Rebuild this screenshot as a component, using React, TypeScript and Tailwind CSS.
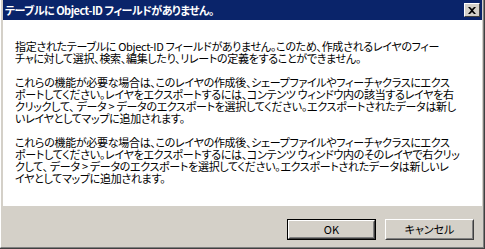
import React from "react";

const font = { fontFamily: '"MS UI Gothic", "Noto Sans CJK JP", sans-serif' };

function Btn({ children, def }: { children: React.ReactNode; def?: boolean }) {
  return (
    <div className={`w-[89px] h-[21px] ${def ? "border border-black" : ""}`}>
      <div className="h-full w-full border border-t-white border-l-white border-r-[#404040] border-b-[#404040]">
        <div className="h-full w-full border border-t-[#d4d0c8] border-l-[#d4d0c8] border-r-[#808080] border-b-[#808080] flex items-center justify-center text-[11px] leading-none text-black bg-[#d4d0c8]">
          {children}
        </div>
      </div>
    </div>
  );
}

export default function App() {
  const p = "whitespace-nowrap";
  return (
    <div
      className="w-[485px] h-[249px] bg-[#d4d0c8] flex flex-col border-r border-b border-r-[#404040] border-b-[#404040] [font-feature-settings:'palt']"
      style={font}
    >
      <div className="flex-1 flex flex-col border-l border-l-white border-r border-r-[#808080] border-b border-b-[#808080] pl-[2px] pr-[1px]">
        <div className="h-[20px] bg-[#0a246a] flex items-center justify-between pl-[2px] pr-[2px]">
          <span className="text-white font-bold text-[11px] leading-none tracking-[-0.5px]">テーブルに Object-ID フィールドがありません。</span>
          <div className="w-[16px] h-[14px] bg-[#d4d0c8] border border-t-white border-l-white border-r-[#404040] border-b-[#404040] flex items-center justify-center">
            <svg width="8" height="7" viewBox="0 0 8 7">
              <path d="M0 0h2l2 2 2-2h2L5 3.5 8 7H6L4 5 2 7H0l3-3.5z" fill="#000" />
            </svg>
          </div>
        </div>
        <div className="h-[186px] bg-white pl-[12px] pt-[20px] text-[11px] leading-[12px] tracking-[-0.3px] text-black">
          <p className={p}>
            指定されたテーブルに Object-ID フィールドがありません。このため、作成されるレイヤのフィー
            <br />
            チャに対して選択、検索、編集したり、リレートの定義をすることができません。
          </p>
          <p className={`${p} mt-[12px]`}>
            これらの機能が必要な場合は、このレイヤの作成後、シェープファイルやフィーチャクラスにエクス
            <br />
            ポートしてください。レイヤをエクスポートするには、コンテンツ ウィンドウ内の該当するレイヤを右
            <br />
            クリックして、 データ &gt; データのエクスポートを選択してください。エクスポートされたデータは新し
            <br />
            いレイヤとしてマップに追加されます。
          </p>
          <p className={`${p} mt-[12px]`}>
            これらの機能が必要な場合は、このレイヤの作成後、シェープファイルやフィーチャクラスにエクス
            <br />
            ポートしてください。レイヤをエクスポートするには、コンテンツ ウィンドウ内のそのレイヤで右クリッ
            <br />
            クして、 データ &gt; データのエクスポートを選択してください。エクスポートされたデータは新しいレ
            <br />
            イヤとしてマップに追加されます。
          </p>
        </div>
        <div className="flex-1 flex justify-end items-start pt-[13px] pr-[8px] gap-[9px]">
          <Btn def>OK</Btn>
          <Btn>キャンセル</Btn>
        </div>
      </div>
    </div>
  );
}
